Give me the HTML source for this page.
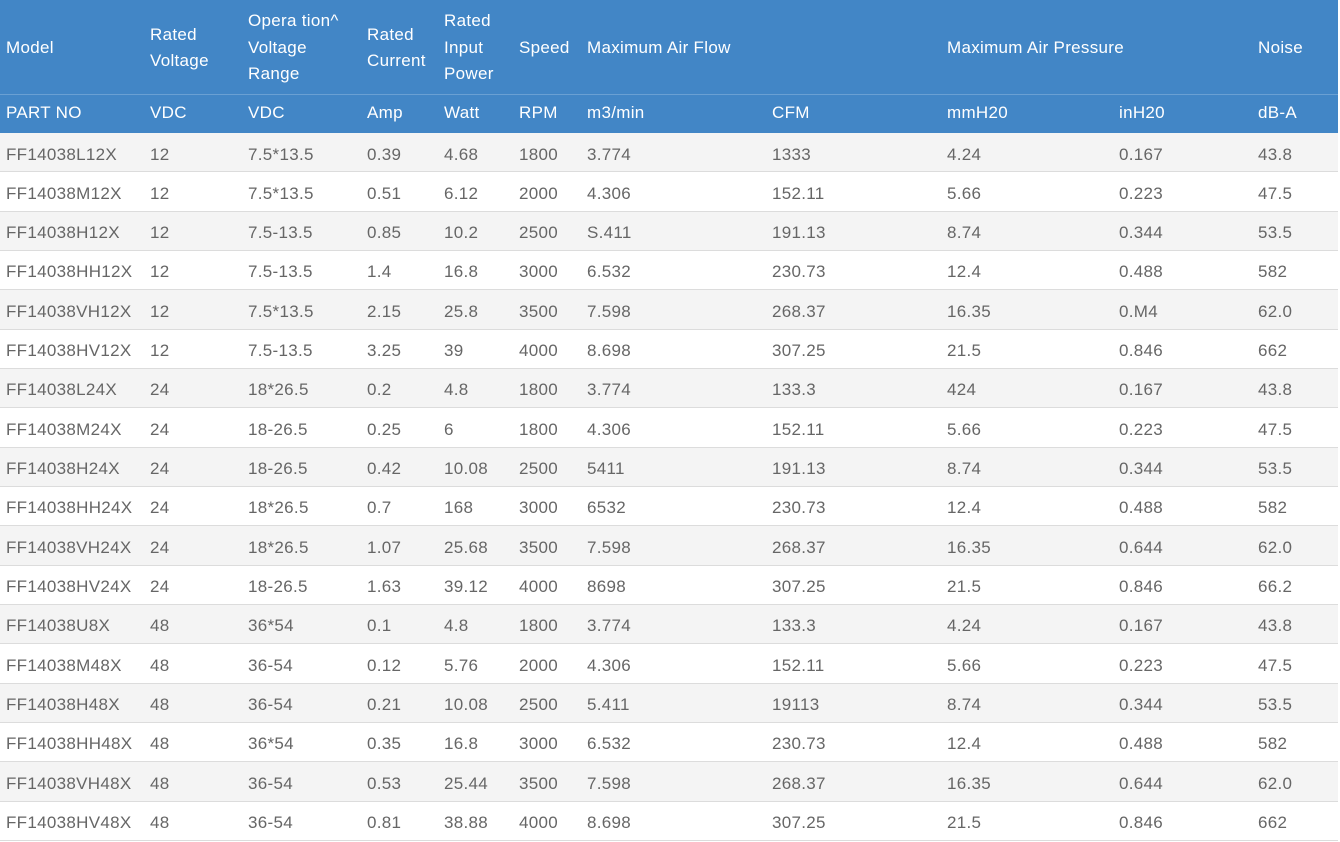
<!DOCTYPE html>
<html><head><meta charset="utf-8"><style>
body{margin:0;width:1340px;height:841px;overflow:hidden;background:#fff;font-family:"Liberation Sans",sans-serif;}
.h{position:absolute;left:0;top:0;width:1338px;height:133px;background:#4286c6;}
.hl{position:absolute;left:0;top:94px;width:1338px;height:1px;background:#6aa0d3;}
.t{position:absolute;color:#fff;font-size:17px;letter-spacing:0.3px;line-height:26.5px;white-space:nowrap;}
.r{position:absolute;left:0;width:1338px;height:39.33px;border-bottom:1px solid #dcdcdc;box-sizing:border-box;}
.c{position:absolute;color:#666;font-size:17px;letter-spacing:0.3px;line-height:39px;white-space:nowrap;}
</style></head><body>
<div class="h"></div><div class="hl"></div>
<div id="hdr"></div>
<div id="rows"></div>
<script>
var X=[6,150,248,367,444,519,587,772,947,1119,1258];
var H=[["Model"],["Rated","Voltage"],["Opera tion^","Voltage","Range"],["Rated","Current"],["Rated","Input","Power"],["Speed"],["Maximum Air Flow"],[],["Maximum Air Pressure"],[],["Noise"]];
var S=["PART NO","VDC","VDC","Amp","Watt","RPM","m3/min","CFM","mmH20","inH20","dB-A"];
var h="";
H.forEach(function(a,i){if(!a.length)return;var top=48-a.length*26.5/2;h+='<div class="t" style="left:'+X[i]+'px;top:'+top+'px">'+a.join("<br>")+'</div>';});
S.forEach(function(s,i){h+='<div class="t" style="left:'+X[i]+'px;top:100px">'+s+'</div>';});
document.getElementById("hdr").innerHTML=h;
var D=[
["FF14038L12X","12","7.5*13.5","0.39","4.68","1800","3.774","1333","4.24","0.167","43.8"],
["FF14038M12X","12","7.5*13.5","0.51","6.12","2000","4.306","152.11","5.66","0.223","47.5"],
["FF14038H12X","12","7.5-13.5","0.85","10.2","2500","S.411","191.13","8.74","0.344","53.5"],
["FF14038HH12X","12","7.5-13.5","1.4","16.8","3000","6.532","230.73","12.4","0.488","582"],
["FF14038VH12X","12","7.5*13.5","2.15","25.8","3500","7.598","268.37","16.35","0.M4","62.0"],
["FF14038HV12X","12","7.5-13.5","3.25","39","4000","8.698","307.25","21.5","0.846","662"],
["FF14038L24X","24","18*26.5","0.2","4.8","1800","3.774","133.3","424","0.167","43.8"],
["FF14038M24X","24","18-26.5","0.25","6","1800","4.306","152.11","5.66","0.223","47.5"],
["FF14038H24X","24","18-26.5","0.42","10.08","2500","5411","191.13","8.74","0.344","53.5"],
["FF14038HH24X","24","18*26.5","0.7","168","3000","6532","230.73","12.4","0.488","582"],
["FF14038VH24X","24","18*26.5","1.07","25.68","3500","7.598","268.37","16.35","0.644","62.0"],
["FF14038HV24X","24","18-26.5","1.63","39.12","4000","8698","307.25","21.5","0.846","66.2"],
["FF14038U8X","48","36*54","0.1","4.8","1800","3.774","133.3","4.24","0.167","43.8"],
["FF14038M48X","48","36-54","0.12","5.76","2000","4.306","152.11","5.66","0.223","47.5"],
["FF14038H48X","48","36-54","0.21","10.08","2500","5.411","19113","8.74","0.344","53.5"],
["FF14038HH48X","48","36*54","0.35","16.8","3000","6.532","230.73","12.4","0.488","582"],
["FF14038VH48X","48","36-54","0.53","25.44","3500","7.598","268.37","16.35","0.644","62.0"],
["FF14038HV48X","48","36-54","0.81","38.88","4000","8.698","307.25","21.5","0.846","662"]];
var r="";
D.forEach(function(row,j){var top=133+j*39.33;r+='<div class="r" style="top:'+top+'px;background:'+(j%2?'#fff':'#f4f4f4')+'">';row.forEach(function(v,i){r+='<div class="c" style="left:'+X[i]+'px;top:1.5px">'+v+'</div>';});r+='</div>';});
document.getElementById("rows").innerHTML=r;
</script>
</body></html>
